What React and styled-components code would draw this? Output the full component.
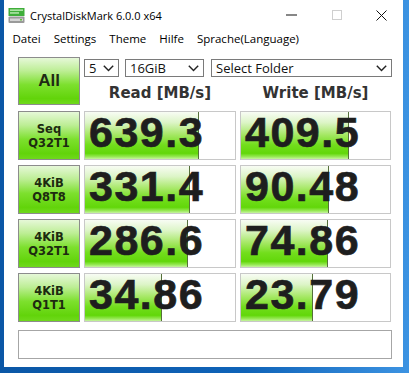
import React from "react";
import styled, { createGlobalStyle } from "styled-components";

const Global = createGlobalStyle`
  html, body { margin: 0; padding: 0; }
  body { width: 409px; height: 373px; overflow: hidden; font-family: "Open Sans", "Noto Sans", sans-serif; }
  #root { width: 409px; height: 373px; }
`;

const Desktop = styled.div`
  width: 409px;
  height: 373px;
  box-sizing: border-box;
  padding: 0 6px 6px 4px;
  background: linear-gradient(90deg, #0b57a6 0%, #0f63b8 60%, #3c93e2 100%);
  display: flex;
`;

const Win = styled.div`
  flex: 1;
  background: #ffffff;
  display: flex;
  flex-direction: column;
`;

const TitleBar = styled.div`
  height: 30px;
  display: flex;
  align-items: center;
  padding-left: 4px;
`;

const TitleText = styled.span`
  font-size: 11px;
  color: #000;
  margin-left: 5px;
  flex: 1;
`;

const WinButton = styled.div`
  width: ${p => p.$w}px;
  height: 30px;
  display: flex;
  align-items: center;
  justify-content: center;
`;

const MenuBar = styled.div`
  height: 17px;
  display: flex;
  align-items: center;
  padding-left: 2px;
`;

const MenuItem = styled.span`
  font-size: 11.5px;
  color: #000;
  padding: 0 ${p => p.$px || 6.5}px;
`;

const Content = styled.div`
  padding: 10px 11px 0 14px;
  display: flex;
  flex-direction: column;
`;

const TopArea = styled.div`
  display: flex;
  gap: 4px;
  height: 48px;
`;

const AllButton = styled.div`
  width: 62px;
  box-sizing: border-box;
  border: 1px solid #8c8c8c;
  background: linear-gradient(180deg, #e6f8d8 0%, #bdee95 28%, #7de02e 58%, #62d40a 88%, #6fd91c 100%);
  display: flex;
  align-items: center;
  justify-content: center;
  font-family: "Liberation Sans", Arial, sans-serif;
  font-weight: bold;
  font-size: 17px;
  color: #1f2a14;
`;

const TopRight = styled.div`
  display: flex;
  flex-direction: column;
`;

const SelectRow = styled.div`
  display: flex;
  margin-top: 2px;
  height: 18px;
`;

const Select = styled.div`
  width: ${p => p.$w}px;
  margin-right: ${p => p.$mr || 0}px;
  box-sizing: border-box;
  border: 1px solid #7a7a7a;
  background: #fff;
  display: flex;
  align-items: center;
  justify-content: space-between;
  padding: 0 4px 0 4px;
  font-size: 13px;
  color: #111;
  line-height: 16px;
`;

const HeaderRow = styled.div`
  display: flex;
  gap: 4px;
  flex: 1;
`;

const Header = styled.div`
  width: ${p => p.$w}px;
  text-align: center;
  font-family: "DejaVu Sans", Verdana, sans-serif;
  font-weight: bold;
  font-size: 15px;
  color: #333;
  padding-top: 7px;
`;

const Rows = styled.div`
  display: flex;
  flex-direction: column;
  gap: 5px;
  margin-top: 6px;
`;

const Row = styled.div`
  display: flex;
  gap: 4px;
  height: 49px;
`;

const Label = styled(AllButton)`
  font-family: "DejaVu Sans", Verdana, sans-serif;
  font-size: 11.5px;
  line-height: 14px;
  flex-direction: column;
  text-align: center;
  color: #1d2b10;
`;

const Cell = styled.div`
  width: ${p => p.$w}px;
  box-sizing: border-box;
  border: 1px solid #c8c8c8;
  background-color: #fff;
  background-image:
    linear-gradient(#55703a, #55703a),
    linear-gradient(180deg, #f8fcf4 0%, #ddf5c8 22%, #a6e866 48%, #72de1c 70%, #62d70a 88%, #96e854 95%, #c6f4a0 100%);
  background-repeat: no-repeat;
  background-size: 1px 100%, ${p => p.$fill}px 100%;
  background-position: ${p => p.$fill - 1}px 0, 0 0;
  display: flex;
  align-items: center;
  padding: 0 0 6px 4px;
  font-family: "Liberation Sans", Arial, sans-serif;
  font-weight: bold;
  font-size: 43px;
  letter-spacing: 1.5px;
  -webkit-text-stroke: 0.7px #1e1e1e;
  color: #1e1e1e;
  line-height: 1;
`;

const StatusBar = styled.div`
  margin-top: 8px;
  width: 374px;
  height: 29px;
  box-sizing: border-box;
  border: 1px solid #a6a6a6;
  background: #fff;
`;

const Chevron = () => (
  <svg width="11" height="7" viewBox="0 0 11 7">
    <polyline points="0.8,0.8 5.5,5.6 10.2,0.8" fill="none" stroke="#222" strokeWidth="1.4" />
  </svg>
);

const AppIcon = () => (
  <svg width="17" height="17" viewBox="0 0 17 17">
    <rect x="0.5" y="1" width="16" height="8" fill="#3fae3a" />
    <rect x="2" y="2.5" width="13" height="1.3" fill="#c9f0c0" />
    <rect x="2" y="5.3" width="9" height="1.3" fill="#c9f0c0" />
    <rect x="0.5" y="9.5" width="16" height="6.5" rx="1" fill="#9a9a9a" />
    <rect x="2" y="11.5" width="13" height="2.5" fill="#d4d4d4" />
    <rect x="12" y="12" width="2" height="1.5" fill="#5fbf3a" />
  </svg>
);

const rows = [
  { a: "Seq", b: "Q32T1", r: "639.3", rf: 114, w: "409.5", wf: 108 },
  { a: "4KiB", b: "Q8T8", r: "331.4", rf: 105, w: "90.48", wf: 88 },
  { a: "4KiB", b: "Q32T1", r: "286.6", rf: 103, w: "74.86", wf: 87 },
  { a: "4KiB", b: "Q1T1", r: "34.86", rf: 77, w: "23.79", wf: 72 },
];

export default function App() {
  return (
    <>
      <Global />
      <Desktop>
        <Win>
          <TitleBar>
            <AppIcon />
            <TitleText>CrystalDiskMark 6.0.0 x64</TitleText>
            <WinButton $w={45}>
              <svg width="11" height="2" viewBox="0 0 11 2"><rect x="0" y="0.5" width="11" height="1" fill="#111" /></svg>
            </WinButton>
            <WinButton $w={45}>
              <svg width="10" height="10" viewBox="0 0 10 10"><rect x="0.5" y="0.5" width="9" height="9" fill="none" stroke="#cfcfcf" /></svg>
            </WinButton>
            <WinButton $w={44}>
              <svg width="11" height="11" viewBox="0 0 11 11"><path d="M0.5 0.5 L10.5 10.5 M10.5 0.5 L0.5 10.5" stroke="#111" strokeWidth="1" /></svg>
            </WinButton>
          </TitleBar>
          <MenuBar>
            <MenuItem>Datei</MenuItem>
            <MenuItem>Settings</MenuItem>
            <MenuItem>Theme</MenuItem>
            <MenuItem>Hilfe</MenuItem>
            <MenuItem>Sprache(Language)</MenuItem>
          </MenuBar>
          <Content>
            <TopArea>
              <AllButton>All</AllButton>
              <TopRight>
                <SelectRow>
                  <Select $w={35} $mr={6}>5<Chevron /></Select>
                  <Select $w={79} $mr={7}>16GiB<Chevron /></Select>
                  <Select $w={181}>Select Folder<Chevron /></Select>
                </SelectRow>
                <HeaderRow>
                  <Header $w={152}>Read [MB/s]</Header>
                  <Header $w={151}>Write [MB/s]</Header>
                </HeaderRow>
              </TopRight>
            </TopArea>
            <Rows>
              {rows.map((r, i) => (
                <Row key={i}>
                  <Label>
                    <span>{r.a}</span>
                    <span>{r.b}</span>
                  </Label>
                  <Cell $w={152} $fill={r.rf}>{r.r}</Cell>
                  <Cell $w={151} $fill={r.wf}>{r.w}</Cell>
                </Row>
              ))}
            </Rows>
            <StatusBar />
          </Content>
        </Win>
      </Desktop>
    </>
  );
}
